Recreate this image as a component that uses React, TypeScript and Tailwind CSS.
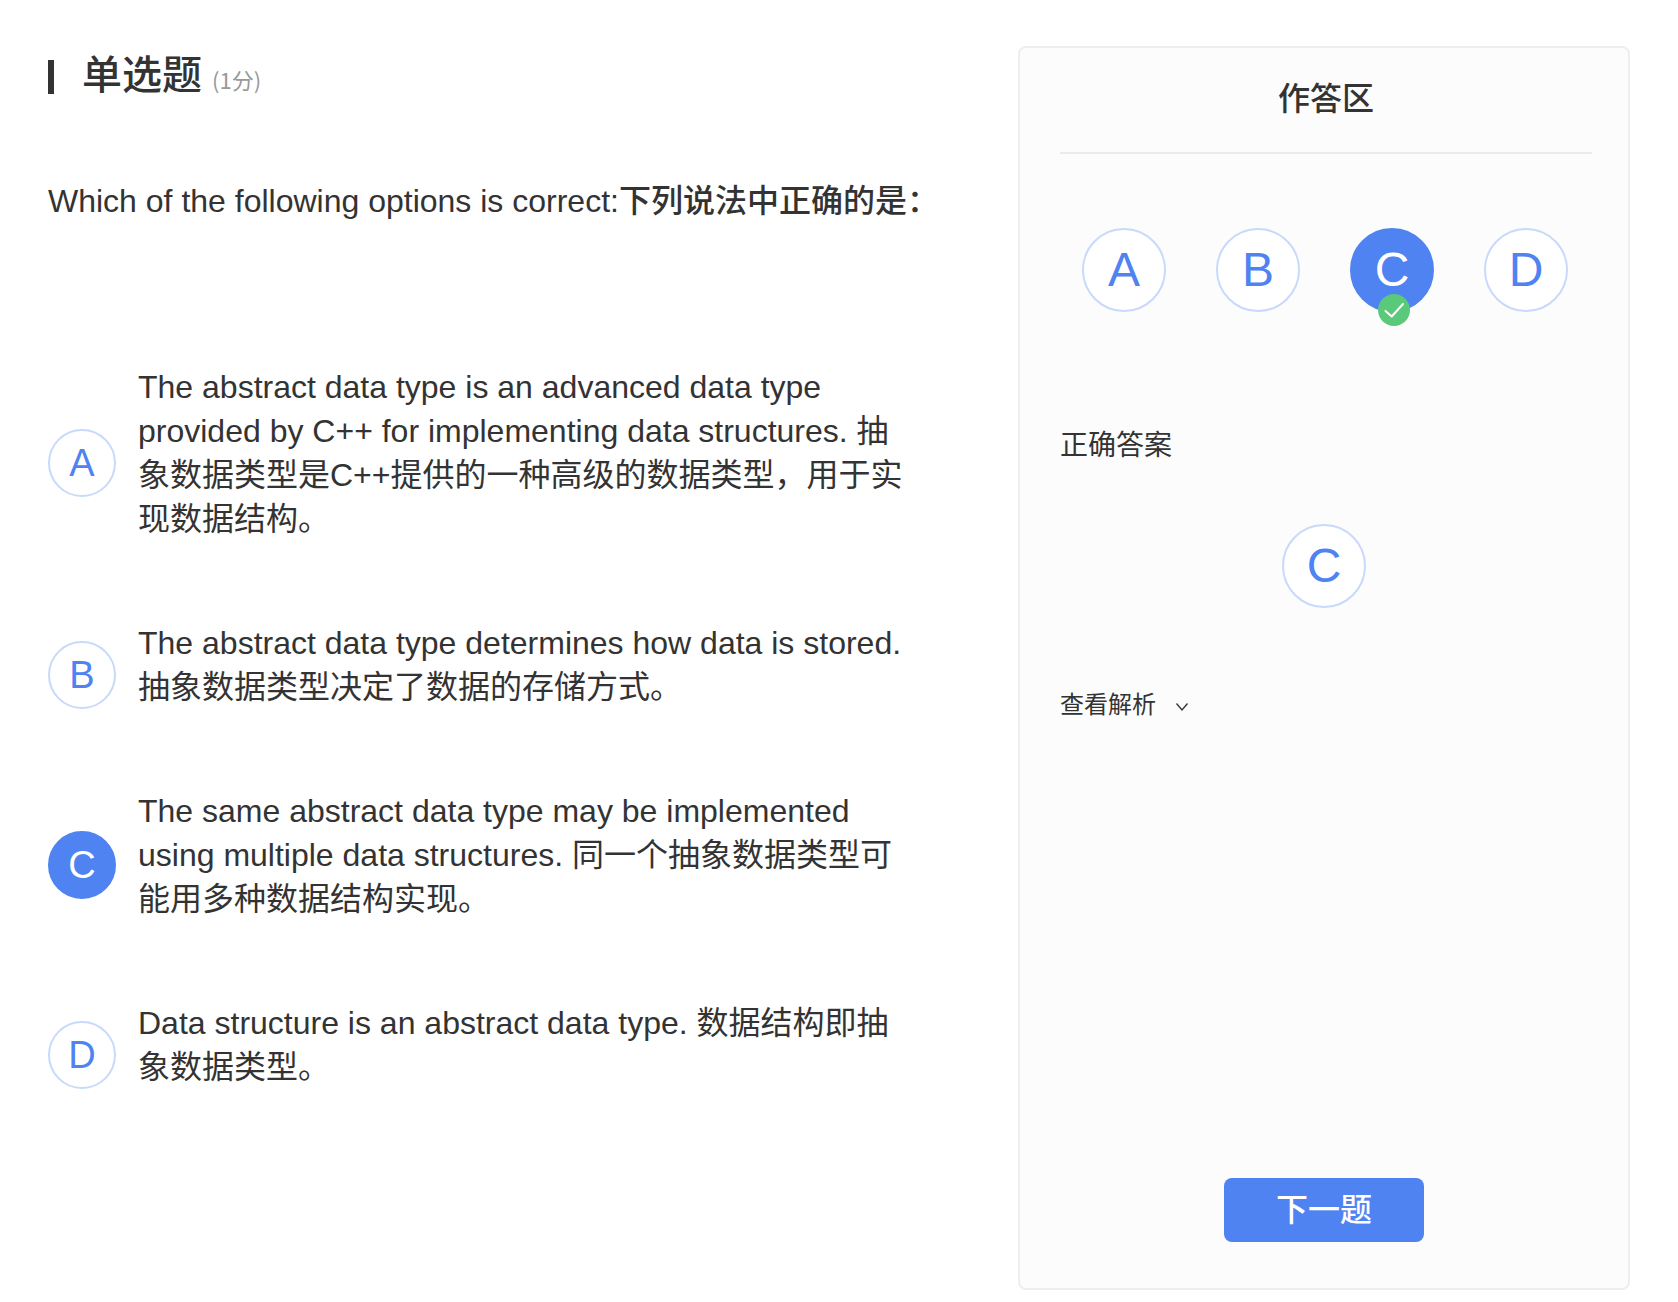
import { useState } from "react";

const options = [
  {
    key: "A",
    text: "The abstract data type is an advanced data type provided by C++ for implementing data structures. 抽象数据类型是C++提供的一种高级的数据类型，用于实现数据结构。",
  },
  {
    key: "B",
    text: "The abstract data type determines how data is stored. 抽象数据类型决定了数据的存储方式。",
  },
  {
    key: "C",
    text: "The same abstract data type may be implemented using multiple data structures. 同一个抽象数据类型可能用多种数据结构实现。",
  },
  {
    key: "D",
    text: "Data structure is an abstract data type. 数据结构即抽象数据类型。",
  },
];

const correctAnswer = "C";

const outlined = "border-[#c8d9fc] bg-white text-[#4f83f1]";
const filled = "border-[#4f83f1] bg-[#4f83f1] text-white";

function CorrectBadge() {
  return (
    <span className="absolute top-16 left-[26px] flex size-8 items-center justify-center rounded-full bg-[#5bc97a]">
      <svg viewBox="0 0 32 32" className="size-8" fill="none" stroke="#fff" strokeWidth="2" strokeLinecap="round" strokeLinejoin="round" aria-hidden="true">
        <path d="M7.5 17 L13.7 22.5 L25 10" />
      </svg>
    </span>
  );
}

export default function App() {
  const [selected, setSelected] = useState("C");
  const [open, setOpen] = useState(false);

  return (
    <div
      lang="zh-CN"
      className="flex min-h-screen bg-white pt-[46px] pr-12 pb-3 pl-12 font-['Liberation_Sans','Noto_Sans_CJK_SC',sans-serif] text-[32px] leading-[44px] text-[#333]"
    >
      <main className="min-w-0 flex-1">
        <header className="flex h-14 items-center font-['Noto_Sans_CJK_SC',sans-serif]">
          <span className="mt-1.5 h-[34px] w-1.5 bg-[#333]" />
          <h1 className="mb-1 ml-7 text-[40px] font-medium">单选题</h1>
          <span className="mt-2.5 ml-2.5 text-[22px] text-[#999]">(1分)</span>
        </header>

        <p className="mt-[77px]">
          Which of the following options is correct:
          <span className="font-medium">下列说法中正确的是：</span>
        </p>

        <ul className="mt-[142px] flex flex-col gap-20 pr-28">
          {options.map((option) => (
            <li key={option.key} className="flex items-center gap-[22px]">
              <button
                type="button"
                aria-pressed={selected === option.key}
                onClick={() => setSelected(option.key)}
                className={`mt-5 flex size-[68px] shrink-0 items-center justify-center rounded-full border-2 text-[38px] ${
                  selected === option.key ? filled : outlined
                }`}
              >
                {option.key}
              </button>
              <p className="min-w-0 flex-1">{option.text}</p>
            </li>
          ))}
        </ul>
      </main>

      <aside className="flex w-[612px] shrink-0 flex-col rounded-lg border-2 border-[#eee] bg-[#fcfcfc] pr-9 pl-10">
        <h2 className="border-b-2 border-[#ebebeb] pt-[29px] pb-[31px] text-center font-medium">
          作答区
        </h2>

        <div className="mt-[74px] mr-0.5 flex justify-center gap-[50px]">
          {options.map((option) => (
            <button
              key={option.key}
              type="button"
              aria-pressed={selected === option.key}
              onClick={() => setSelected(option.key)}
              className={`relative flex size-[84px] shrink-0 items-center justify-center rounded-full border-2 text-5xl ${
                selected === option.key ? filled : outlined
              }`}
            >
              {option.key}
              {selected === option.key && option.key === correctAnswer && <CorrectBadge />}
            </button>
          ))}
        </div>

        <h3 className="mt-28 text-[28px]">正确答案</h3>
        <div className="mt-14 mr-1 flex justify-center">
          <span className="flex size-[84px] items-center justify-center rounded-full border-2 border-[#c8d9fc] bg-white text-5xl text-[#4f83f1]">
            {correctAnswer}
          </span>
        </div>

        <button
          type="button"
          aria-expanded={open}
          onClick={() => setOpen(!open)}
          className="mt-[75px] flex items-center gap-5 self-start text-2xl leading-[44px]"
        >
          查看解析
          <svg viewBox="0 0 12 8" className="mt-1 h-2 w-3" fill="none" stroke="#333" strokeWidth="1.3" aria-hidden="true">
            <path d="M0.5 0.5 L6 7 L11.5 0.5" />
          </svg>
        </button>

        <button
          type="button"
          className="mt-auto mr-1 mb-[46px] h-16 w-[200px] self-center rounded-lg bg-[#4f83f1] font-medium text-white"
        >
          下一题
        </button>
      </aside>
    </div>
  );
}
